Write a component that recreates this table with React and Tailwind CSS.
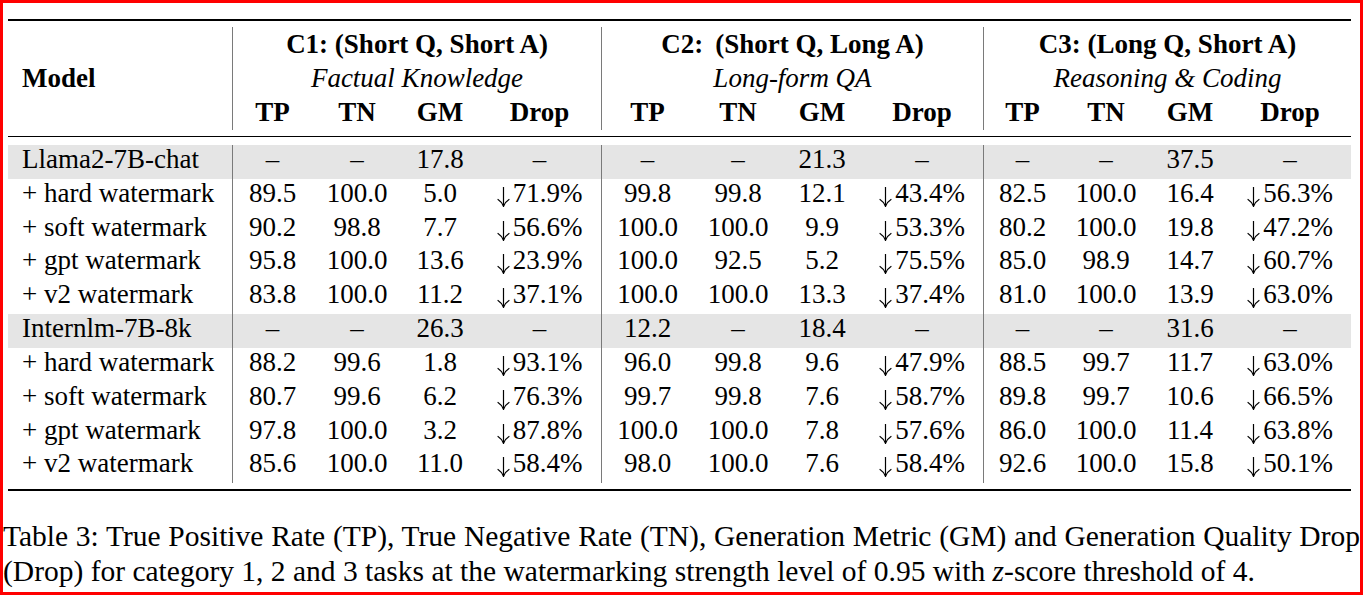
import React from "react";

const COLS =
  "grid grid-cols-[224px_80px_90px_76px_123px_92px_90px_78px_122px_78px_90px_78px_122px]";

const rows = [
  { gray: true, name: "Llama2-7B-chat", v: ["–", "–", "17.8", "–", "–", "–", "21.3", "–", "–", "–", "37.5", "–"] },
  { name: "+ hard watermark", v: ["89.5", "100.0", "5.0", "↓71.9%", "99.8", "99.8", "12.1", "↓43.4%", "82.5", "100.0", "16.4", "↓56.3%"] },
  { name: "+ soft watermark", v: ["90.2", "98.8", "7.7", "↓56.6%", "100.0", "100.0", "9.9", "↓53.3%", "80.2", "100.0", "19.8", "↓47.2%"] },
  { name: "+ gpt watermark", v: ["95.8", "100.0", "13.6", "↓23.9%", "100.0", "92.5", "5.2", "↓75.5%", "85.0", "98.9", "14.7", "↓60.7%"] },
  { name: "+ v2 watermark", v: ["83.8", "100.0", "11.2", "↓37.1%", "100.0", "100.0", "13.3", "↓37.4%", "81.0", "100.0", "13.9", "↓63.0%"] },
  { gray: true, name: "Internlm-7B-8k", v: ["–", "–", "26.3", "–", "12.2", "–", "18.4", "–", "–", "–", "31.6", "–"] },
  { name: "+ hard watermark", v: ["88.2", "99.6", "1.8", "↓93.1%", "96.0", "99.8", "9.6", "↓47.9%", "88.5", "99.7", "11.7", "↓63.0%"] },
  { name: "+ soft watermark", v: ["80.7", "99.6", "6.2", "↓76.3%", "99.7", "99.8", "7.6", "↓58.7%", "89.8", "99.7", "10.6", "↓66.5%"] },
  { name: "+ gpt watermark", v: ["97.8", "100.0", "3.2", "↓87.8%", "100.0", "100.0", "7.8", "↓57.6%", "86.0", "100.0", "11.4", "↓63.8%"] },
  { name: "+ v2 watermark", v: ["85.6", "100.0", "11.0", "↓58.4%", "98.0", "100.0", "7.6", "↓58.4%", "92.6", "100.0", "15.8", "↓50.1%"] },
];

function DownArrow() {
  return (
    <svg
      width="13"
      height="20"
      viewBox="0 0 13 20"
      className="inline-block align-[-5px] mr-[3px]"
      fill="none"
      stroke="black"
      strokeWidth="1.2"
      strokeLinecap="round"
    >
      <path d="M6.5 0.5 V19.3" />
      <path d="M1 12.5 Q5 15 6.5 19.3 Q8 15 12 12.5" />
    </svg>
  );
}

function Val({ text }) {
  if (text.startsWith("↓")) {
    return (
      <span>
        <DownArrow />
        {text.slice(1)}
      </span>
    );
  }
  return <span>{text}</span>;
}

function BodyRow({ row }) {
  return (
    <div className={`${COLS} h-[33.82px] ${row.gray ? "bg-[#e5e5e5]" : ""}`}>
      <div className="pl-[14px] leading-[28px] whitespace-nowrap">{row.name}</div>
      {row.v.map((t, i) => (
        <div
          key={i}
          className={`text-center leading-[28px] whitespace-nowrap ${
            i === 0 || i === 4 || i === 8 ? "border-l border-[#7a7a7a]" : ""
          }`}
        >
          <Val text={t} />
        </div>
      ))}
    </div>
  );
}

const groups = [
  { title: "C1: (Short Q, Short A)", sub: "Factual Knowledge" },
  { title: "C2:\u2009 (Short Q, Long A)", sub: "Long-form QA" },
  { title: "C3: (Long Q, Short A)", sub: "Reasoning & Coding" },
];

export default function App() {
  return (
    <div className="font-serif">
      <div className="w-[1363px] h-[595px] border-[3px] border-[#ff0000] bg-white text-black overflow-hidden [font-family:Liberation_Serif,serif] text-[27px]">
        <div className="ml-[5px] w-[1343px]">
          {/* top rule */}
          <div className="mt-[16px] h-[2px] bg-black" />
          {/* header */}
          <div className={`${COLS} grid-rows-[34px_34px_35px] mt-[6px]`}>
            {/* row 1 */}
            <div />
            {groups.map((g, i) => (
              <div
                key={"t" + i}
                className="col-span-4 border-l border-[#7a7a7a] text-center font-bold leading-[34px] whitespace-nowrap"
              >
                {g.title}
              </div>
            ))}
            {/* row 2 */}
            <div className="pl-[14px] font-bold leading-[34px]">Model</div>
            {groups.map((g, i) => (
              <div
                key={"s" + i}
                className="col-span-4 border-l border-[#7a7a7a] text-center italic leading-[34px] whitespace-nowrap"
              >
                {g.sub}
              </div>
            ))}
            {/* row 3 */}
            <div />
            {[0, 1, 2].map((g) =>
              ["TP", "TN", "GM", "Drop"].map((h, j) => (
                <div
                  key={g + h}
                  className={`text-center font-bold leading-[34px] ${
                    j === 0 ? "border-l border-[#7a7a7a]" : ""
                  }`}
                >
                  {h}
                </div>
              ))
            )}
          </div>
          {/* mid rule */}
          <div className="mt-[6px] h-px bg-black" />
          {/* body */}
          <div className="mt-[8px]">
            {rows.map((r, i) => (
              <BodyRow key={i} row={r} />
            ))}
          </div>
          {/* bottom rule */}
          <div className="mt-[6px] h-[2px] bg-black" />
        </div>
        {/* caption */}
        <div className="mt-[28px] w-[1357px] text-[29.5px] leading-[35px]">
          <div className="whitespace-nowrap text-justify [text-align-last:justify]">
            Table 3: True Positive Rate (TP), True Negative Rate (TN), Generation Metric (GM) and Generation Quality Drop
          </div>
          <div className="whitespace-nowrap">
            (Drop) for category 1, 2 and 3 tasks at the watermarking strength level of 0.95 with{" "}
            <span className="italic">z</span>-score threshold of 4.
          </div>
        </div>
      </div>
    </div>
  );
}
